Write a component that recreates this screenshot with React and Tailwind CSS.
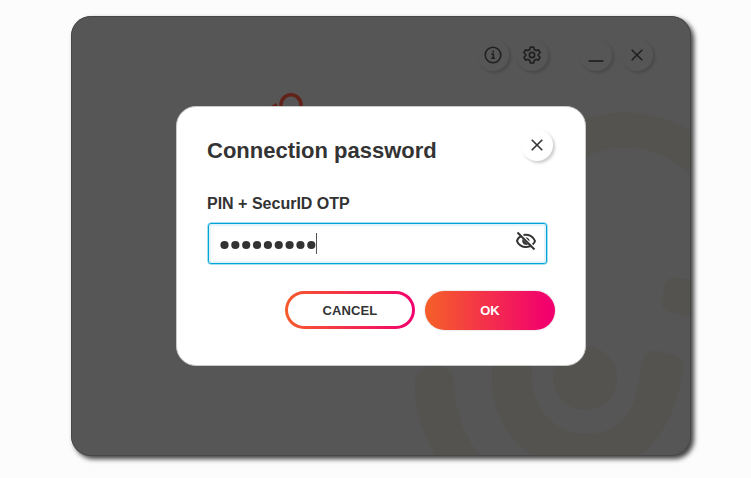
import React from "react";

function RoundButton({ label, light, children }) {
  return (
    <button
      aria-label={label}
      className={
        light
          ? "flex h-8 w-8 items-center justify-center rounded-full bg-white text-[#333] shadow-[2px_2px_3px_rgba(0,0,0,0.2)]"
          : "flex h-8 w-8 items-center justify-center rounded-full bg-[#565656] text-[#202020] shadow-[2px_2px_3px_rgba(0,0,0,0.15)]"
      }
    >
      {children}
    </button>
  );
}

function Cross() {
  return (
    <svg width="20" height="20" viewBox="0 0 20 20" fill="none" stroke="currentColor" strokeWidth="1.6">
      <path d="M4.7 4.7 15.3 15.3M15.3 4.7 4.7 15.3" />
    </svg>
  );
}

function Backdrop() {
  return (
    <svg className="absolute inset-0" width="620" height="440" viewBox="71 16 620 440">
      <g fill="#555350">
        <circle cx="625" cy="238" r="108" fill="none" stroke="#555350" strokeWidth="35" strokeDasharray="339 340" transform="rotate(180 625 238)" />
        <circle cx="585" cy="378" r="32" />
        <path d="M492 377V350H532V377C532 410 556 434 587 434C611 434 628 420 634 401C639 386 640 371 643 361Q646 349 658 351L674 355Q685 359 683 370C678 402 667 434 640 456H533C506 439 492 410 492 377Z" />
        <path d="M415 385Q415 366 434 366Q453 366 454 382C455 413 464 436 480 456H436C422 433 415 411 415 385Z" />
        <path d="M691 280 677 278Q668 276 665 285L662 300Q661 309 670 312L691 317Z" />
      </g>
      <path d="M281 112V105A10 10.3 0 0 1 301 105V112M272 107.500 277 104.500" fill="none" stroke="#622219" strokeWidth="3.6" />
    </svg>
  );
}

export default function App() {
  return (
    <div className="h-[478px] w-[751px] overflow-hidden bg-[#fcfcfc] pt-4 pl-[71px] font-['Liberation_Sans',Arial,sans-serif] text-[#333]">
      <main className="relative h-[440px] w-[620px] rounded-[20px] bg-[#565656] shadow-[3px_3px_5px_rgba(0,0,0,0.75)]">
        <div className="absolute inset-0 overflow-hidden rounded-[20px]">
          <Backdrop />
        </div>
        <div className="pointer-events-none absolute inset-0 rounded-[20px] border border-[#484848]" />
        <header className="relative flex h-[90px] justify-end pt-[23px] pr-[38px]">
          <div className="mr-8 flex gap-[7px]">
            <RoundButton label="Information">
              <svg width="20" height="20" viewBox="0 0 20 20" fill="none" stroke="currentColor" strokeWidth="1.6">
                <circle cx="10" cy="10" r="7.8" />
                <path d="M8.2 9H10.3V13.3M8.2 13.3H12M9.3 6.5H11" />
              </svg>
            </RoundButton>
            <RoundButton label="Settings">
              <svg width="20" height="20" viewBox="0 0 24 24" fill="none" stroke="currentColor" strokeWidth="2" strokeLinejoin="round">
                <path d="M10 2.5h4l.7 3 2 1.2 3-.9 2 3.5-2.2 2.1v1.2l2.2 2.1-2 3.5-3-.9-2 1.2-.7 3h-4l-.7-3-2-1.2-3 .9-2-3.5 2.2-2.1v-1.2L2.300 9.300l2-3.500 3 .9 2-1.200Z" />
                <circle cx="12" cy="12" r="3.200" />
              </svg>
            </RoundButton>
          </div>
          <div className="flex gap-[9px]">
            <RoundButton label="Minimize">
              <svg width="20" height="20" viewBox="0 0 20 20"><path d="M2.500 16H17.500" stroke="currentColor" strokeWidth="1.700" /></svg>
            </RoundButton>
            <RoundButton label="Close"><Cross /></RoundButton>
          </div>
        </header>
        <section className="relative ml-[105px] h-[260px] w-[410px] rounded-[20px] border border-[#c8c8c8] bg-white pt-[22px] pr-[30px] pl-[30px]">
          <div className="flex h-8 items-start justify-between">
            <h1 className="pt-[9px] text-[22px] leading-[26px] font-bold whitespace-nowrap">Connection password</h1>
            <div className="mr-[2px]"><RoundButton label="Close dialog" light><Cross /></RoundButton></div>
          </div>
          <label className="mt-[33px] block text-base leading-5 font-bold">PIN + SecurID OTP</label>
          <div className="mt-[9px] ml-px flex h-[41px] w-[339px] items-center rounded-[3px] border border-[#00a3d9] pr-[9px] pl-[11px] shadow-[0_0_0_0.5px_#4bbde3,inset_0_0_1px_2px_#e2f3f8]">
            <svg className="mt-[3px]" width="96" height="10" viewBox="0 0 96 10" fill="#333">
              {Array.from({ length: 9 }, (_, i) => (
                <circle key={i} cx={4.5 + i * 10.85} cy="5" r="4.1" />
              ))}
            </svg>
            <span className="h-[21px] w-px bg-[#555]" />
            <svg className="mb-[5px] ml-auto" width="22" height="22" viewBox="0 0 22 22" fill="none" stroke="#333" strokeWidth="2">
              <path d="M6.500 5.800C4 7 2.300 9 2 11c1 3.500 5 6 9 6 1.500 0 3-.3 4.200-.8M8.500 5c5-1 10 1.500 11.500 6-.4 1.400-1.200 2.600-2.400 3.600M2.500 2.500 19.500 19.500" />
              <path d="M7.500 9 13 14.500C10 16 6 13 7.500 9ZM10.500 7.500c2-.5 4.500 1.500 4 4Z" fill="#333" stroke="none" />
            </svg>
          </div>
          <div className="mt-[27px] flex justify-end gap-[10px]">
            <button className="h-[38px] w-[130px] rounded-full bg-linear-to-r/srgb from-[#f55b2b] to-[#f2006e] p-[3px] text-[13px] font-bold tracking-[0.1px]">
              <span className="flex h-full items-center justify-center rounded-full bg-white pt-px">CANCEL</span>
            </button>
            <button className="h-[39px] w-[130px] rounded-full bg-linear-to-r/srgb from-[#f55b2b] from-5% to-[#f2006e] to-95% text-[13px] font-bold text-white shadow-[0_0_2px_rgba(0,0,0,0.25)]">OK</button>
          </div>
        </section>
      </main>
    </div>
  );
}
